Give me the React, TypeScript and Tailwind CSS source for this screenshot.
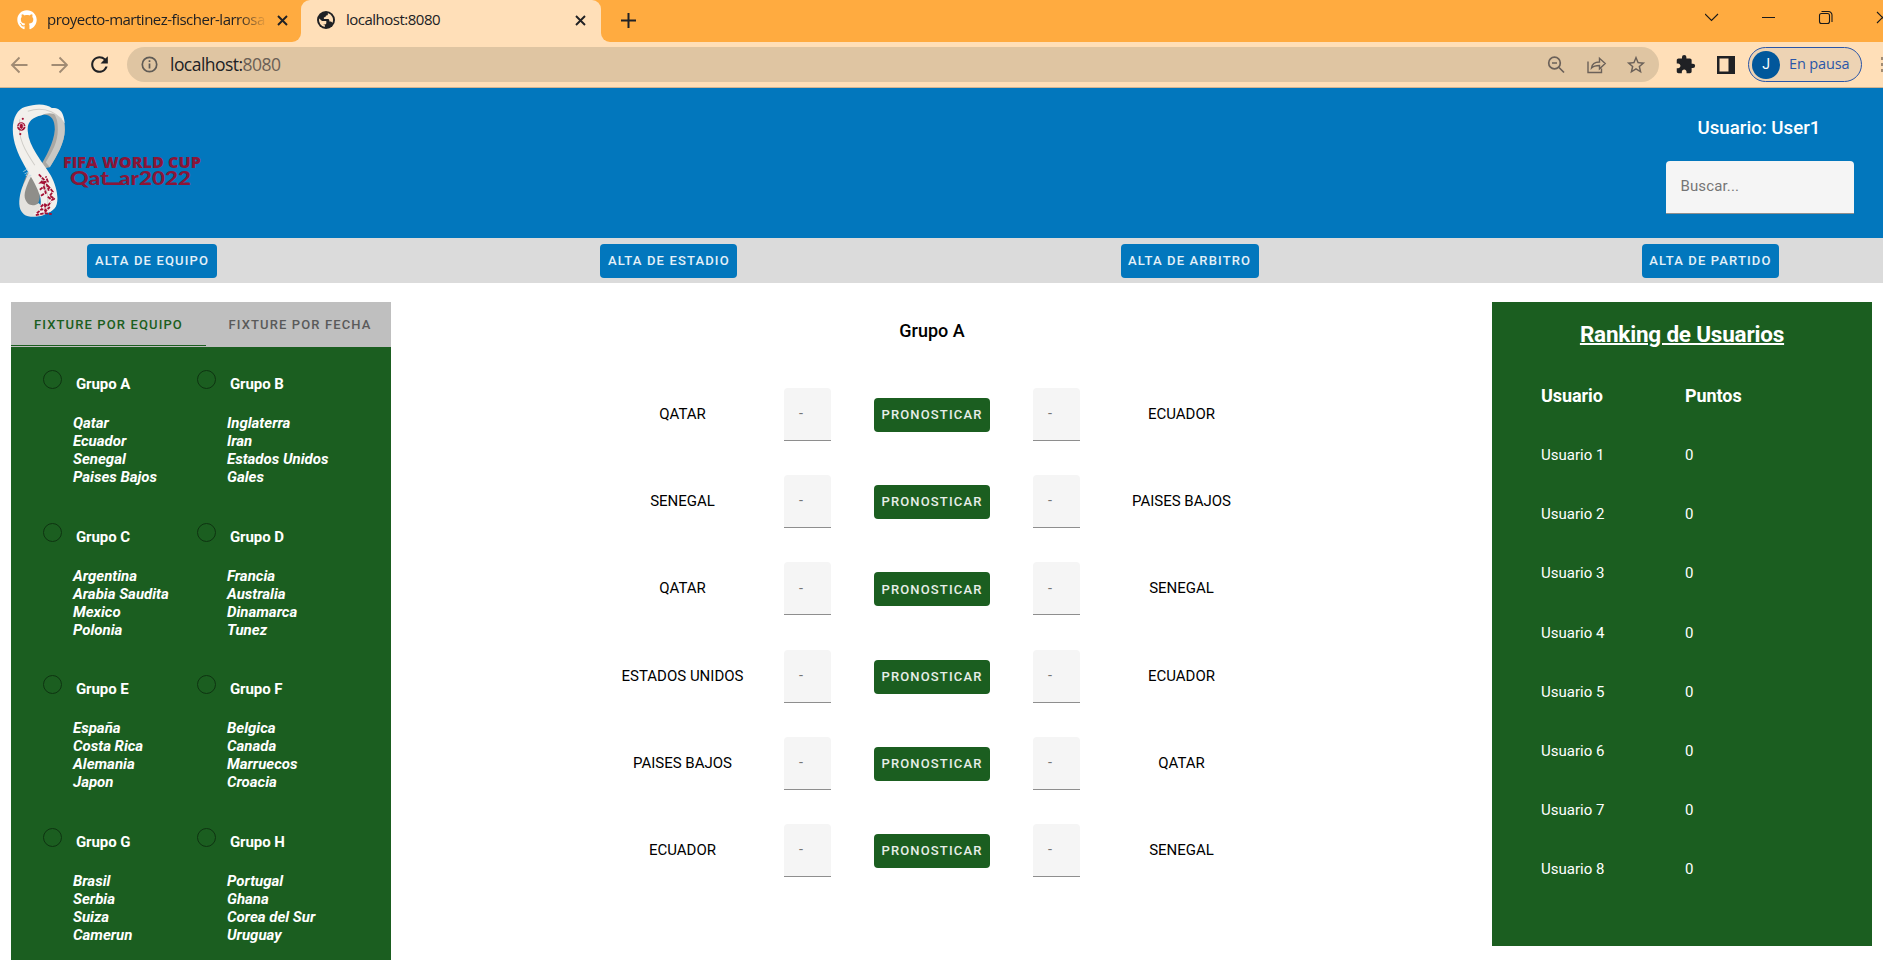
import React from "react";
import { FaGithub } from "react-icons/fa";
import { MdExtension, MdStarOutline, MdRefresh } from "react-icons/md";

const groups = [
  ["A", ["Qatar", "Ecuador", "Senegal", "Paises Bajos"]],
  ["B", ["Inglaterra", "Iran", "Estados Unidos", "Gales"]],
  ["C", ["Argentina", "Arabia Saudita", "Mexico", "Polonia"]],
  ["D", ["Francia", "Australia", "Dinamarca", "Tunez"]],
  ["E", ["España", "Costa Rica", "Alemania", "Japon"]],
  ["F", ["Belgica", "Canada", "Marruecos", "Croacia"]],
  ["G", ["Brasil", "Serbia", "Suiza", "Camerun"]],
  ["H", ["Portugal", "Ghana", "Corea del Sur", "Uruguay"]],
] as [string, string[]][];

const matches = [
  ["QATAR", "ECUADOR"],
  ["SENEGAL", "PAISES BAJOS"],
  ["QATAR", "SENEGAL"],
  ["ESTADOS UNIDOS", "ECUADOR"],
  ["PAISES BAJOS", "QATAR"],
  ["ECUADOR", "SENEGAL"],
];

function CloseIcon({ className = "" }: { className?: string }) {
  return (
    <svg className={className} width="11" height="11" viewBox="0 0 11 11" stroke="#202124" strokeWidth="1.9" fill="none">
      <path d="M1 1l9 9M10 1l-9 9" />
    </svg>
  );
}

function TabBar() {
  return (
    <div className="flex h-[42px] bg-[#ffdfb8] text-[#202124]">
      <div className="flex w-[301px] items-center rounded-br-[9px] bg-[#ffab40] pb-[2px] pl-[17px]">
        <FaGithub size={20} color="#fff" className="shrink-0" />
        <span className="ml-[10px] w-[221px] overflow-hidden pb-px text-[15px] tracking-[-0.5px] whitespace-nowrap [mask-image:linear-gradient(to_right,black_86%,transparent)]">
          proyecto-martinez-fischer-larrosa
        </span>
        <CloseIcon className="ml-[9px]" />
      </div>
      <div className="flex w-[300px] bg-[linear-gradient(to_bottom,#ffab40_50%,#ffdfb8_50%)]">
        <div className="flex w-full items-center rounded-t-[9px] bg-[#ffdfb8] pb-[2px] pl-4">
          <GlobeIcon />
          <span className="ml-[11px] w-[229px] pb-px text-[15px] tracking-[-0.5px]">localhost:8080</span>
          <CloseIcon />
        </div>
      </div>
      <div className="flex flex-1 items-center rounded-bl-[9px] bg-[#ffab40] pl-[20px]">
        <svg className="mb-[2px]" width="15" height="15" viewBox="0 0 15 15" stroke="#202124" strokeWidth="2" fill="none">
          <path d="M7.500 0v15M0 7.500h15" />
        </svg>
        <div className="ml-auto flex h-full items-start pt-[10px]">
          <svg width="178" height="16" viewBox="0 0 178 16" stroke="#1a1a1a" strokeWidth="1.1" fill="none">
            <path d="M0 4l6.500 6.500L13 4M57 7.500h13M172 2l11 11M172 13l11-11" />
            <rect x="114.500" y="3.500" width="10" height="10" rx="2" />
            <path d="M116.500 1.500h7a3.500 3.500 0 0 1 3.500 3.500v7" />
          </svg>
        </div>
      </div>
    </div>
  );
}

function GlobeIcon() {
  return (
    <svg width="18" height="18" viewBox="0 0 18 18">
      <circle cx="9" cy="9" r="9" fill="#202124" />
      <path fill="#ffdfb8" d="M10.800 2.100c.4 1.600-.3 2.300-1.800 2.400-.2 1.400-.8 1.700-2.100 1.800v1.600h4.200c1.300.2 1.300 1.300 1.300 2.500h1.200c1 .2 1.500.8 1.700 1.700A7.100 7.100 0 0 0 10.800 2.100z" />
      <path fill="#ffdfb8" d="M2.100 7.500l4 3.800v1c0 .9.700 1.600 1.700 1.700v2A7.100 7.100 0 0 1 2.100 7.500z" />
      <path fill="#ffdfb8" d="M2.100 7.500l2.600 2.400h4.600v2.200c0 .8-.5 1.300-1.300 1.300H6z" />
    </svg>
  );
}

function Toolbar() {
  return (
    <div className="flex h-[46px] items-center border-b border-[#d0b493] bg-[#ffdfb8]">
      <svg className="ml-[10px]" width="58" height="18" viewBox="0 0 58 18" stroke="#a18b73" strokeWidth="1.900" fill="none">
        <path d="M17.500 9H2.500M9.500 1.500L2 9l7.500 7.500M41.500 9h15M49.500 1.500L57 9l-7.500 7.500" />
      </svg>
      <MdRefresh size={25} className="ml-[19px] text-[#202124]" />
      <div className="ml-[15px] flex h-[35px] w-[1532px] items-center rounded-full bg-[#dfc5a2] pl-[14px]">
        <svg width="17" height="17" viewBox="0 0 17 17" fill="none" stroke="#5f5b55" strokeWidth="1.700">
          <circle cx="8.500" cy="8.500" r="7.200" />
          <path d="M8.500 7.500v5M8.500 4.300v1.700" />
        </svg>
        <span className="ml-3 text-[17.500px] tracking-[-0.540px] text-[#202124]">
          localhost:<span className="text-[#6b6055]">8080</span>
        </span>
        <svg className="mr-[17px] ml-auto" width="61" height="20" viewBox="0 0 61 20" stroke="#6b6159" strokeWidth="1.700" fill="none">
          <circle cx="7.500" cy="8" r="5.800" />
          <path d="M12 12.500l5 5M5 8h5" />
          <path strokeWidth="1.400" d="M41 6.500v11h13.500v-4M44.500 13c.5-4 3.500-6 8-6V3.300l5.700 5.300-5.700 5.200V10.500c-3.500 0-6 .5-8 2.500z" />
        </svg>
        <MdStarOutline size={22} className="mr-[12px] text-[#6b6159]" />
      </div>
      <MdExtension size={21} className="ml-[16px] text-[#202124]" />
      <svg className="ml-[21px]" width="18" height="18" viewBox="0 0 18 18">
        <path fill="#202124" fillRule="evenodd" d="M0 0h18v18H0zM2.500 2.500v13h9v-13z" />
      </svg>
      <div className="ml-[13px] flex h-[35px] w-[114px] items-center rounded-full border border-[#2a56a8] bg-[#edd3b4] pl-[3px] text-[#2a56a8]">
        <span className="flex h-7 w-7 items-center justify-center rounded-full bg-[#01579b] pb-px text-[14px] text-white [font-family:Roboto]">J</span>
        <span className="ml-[9px] pb-[2px] text-[14.500px] tracking-[-0.150px]">En pausa</span>
      </div>
      <svg className="ml-[19px]" width="2" height="16" viewBox="0 0 2 16" fill="#a18b73">
        <path d="M0 0h2v3H0zM0 6h2v3H0zM0 12h2v3H0z" />
      </svg>
    </div>
  );
}

function CupLogo() {
  return (
    <svg width="192" height="116" viewBox="0 0 192 116">
      <g transform="translate(-1.200 0) scale(1 1.020)">
        <path fill="#a9a8a4" fillRule="evenodd" d="M36 4c12-1 19 6 19 21 0 13-8 26-15 37L29 64c7-13 15-25 16-39 0-12-6-17-17-13z" />
        <path fill="#c9c8c4" d="M44 4c9 3 11 12 11 21 0 13-8 26-15 37l-4-5c7-11 12-20 12-32 0-8-1-13-6-18z" />
        <path fill="#8f8e8a" d="M19 65c-5 10-8 20-7 27 2 9 9 13 14 8 5-4 5-12 2-19z" />
        <path fill="#e4e2de" d="M20 64l3 4c-5 9-9 18-8 24 2 8 9 9 14 5l8 10c-5 4-18 5-23 1-6-5-5-14-3-22 2-7 6-13 9-22z" />
        <path fill="#f2f0ec" d="M3 25C3 13 8 5 15 3c12-4 22-3 27 1 8-1 12 4 13 15-6-10-15-12-23-8-10 2-15 7-14 16 1 15 14 29 23 43 5 9 8 20 6 28-2 8-13 12-24 10 8-3 10-12 6-21C24 71 3 50 3 25z" />
        <path fill="none" stroke="#cfcdc8" strokeWidth="1" d="M10 15c-3 18 6 32 15 45M18 7c13-4 24-2 34 8M30 70c7 12 10 22 7 34" />
        <circle cx="11.500" cy="22" r="4.200" fill="#a41135" />
        <circle cx="13" cy="14.500" r="1.100" fill="#a41135" />
        <circle cx="10.500" cy="29.500" r="1.100" fill="#a41135" />
        <path fill="none" stroke="#f2f0ec" strokeWidth=".8" d="M9.500 20l2-1 2 1v3l-2 2-2-2zM7.500 22h2M13.500 22h3" />
        <path fill="none" stroke="#a41135" strokeWidth="1.800" strokeDasharray="3.500 1" d="M29 69l5 5-3 3 7-1-2-5M32 77l5 2 2 6M30 84l4-3 2 6-5 3M38 80l5 6-3 4 5 3M38 91l4 3 3-1M31 101l3-3 4 2 3-4M27 107l5-4 4 2 4-4M26 109l9-2 7 1M35 98l1 9" />
      </g>
      <text x="11" y="66" transform="rotate(58 11 66)" className="[font-family:'Open_Sans']" fontSize="7" fill="#c9d9e4">TM</text>
      <text x="52" y="64" className="[font-family:'Open_Sans',sans-serif]" fontSize="15" fontWeight="800" fill="#8a1538" textLength="138" lengthAdjust="spacingAndGlyphs">FIFA WORLD CUP</text>
      <text x="59" y="81" className="[font-family:Lato,sans-serif]" fontSize="19.500" fontWeight="900" fill="#8a1538" textLength="39" lengthAdjust="spacingAndGlyphs">Qat</text>
      <path stroke="#8a1538" strokeWidth="2.600" d="M95 79.700h17" />
      <text x="108" y="81" className="[font-family:Lato,sans-serif]" fontSize="19.500" fontWeight="900" fill="#8a1538" textLength="72" lengthAdjust="spacingAndGlyphs">ar2022</text>
    </svg>
  );
}

function Button({ children, className }: { children: string; className: string }) {
  return (
    <button className={"flex h-[34px] shrink-0 items-center justify-center rounded-[4px] text-[13px] font-medium tracking-[1.150px] whitespace-nowrap text-white/90 " + className}>
      {children}
    </button>
  );
}

function ScoreInput() {
  return (
    <div className="flex h-[53px] w-[47px] items-center rounded-t-[4px] border-b border-[#8e8e8e] bg-[#f5f5f5] pl-[15px] text-[14.400px] text-[#757575]">-</div>
  );
}

export default function App() {
  return (
    <div className="flex h-[960px] w-[1883px] flex-col overflow-hidden bg-white [font-family:Roboto,sans-serif]">
      <div className="[font-family:'Open_Sans',sans-serif]">
        <TabBar />
        <Toolbar />
      </div>
      <header className="flex h-[150px] shrink-0 justify-between bg-[#0277bd] pr-[29px] pl-[11px]">
        <div className="pt-[16px]"><CupLogo /></div>
        <div className="flex w-[188px] flex-col items-center pt-[26px]">
          <div className="h-[47px] pr-[2px] text-[18.700px] leading-[29px] font-medium text-white">Usuario: User1</div>
          <div className="flex h-[53px] w-full items-center rounded-t-[4px] border-b border-[#8e8e8e] bg-[#f5f5f5] pb-px pl-[14.400px] text-[15px] tracking-[0.150px] text-[#757575]">Buscar...</div>
        </div>
      </header>
      <nav className="flex h-[45px] shrink-0 justify-between bg-[#dbdbdb] pt-[6px] pr-[104px] pl-[87px]">
        <Button className="w-[130px] bg-[#0277bd]">ALTA DE EQUIPO</Button>
        <Button className="w-[137px] bg-[#0277bd]">ALTA DE ESTADIO</Button>
        <Button className="w-[138px] bg-[#0277bd]">ALTA DE ARBITRO</Button>
        <Button className="w-[137px] bg-[#0277bd]">ALTA DE PARTIDO</Button>
      </nav>
      <main className="flex flex-1 items-start pt-[19px] pl-[11px]">
        <aside className="h-[658px] w-[380px] bg-[#1b5e20]">
          <div className="flex h-[45px] bg-[#bfbfbf] text-[13px] font-medium tracking-[1.120px]">
            <div className="mb-[1px] flex w-[195px] items-center justify-center border-b border-[#1b5e20] pt-[2px] text-[#1b5e20]">FIXTURE POR EQUIPO</div>
            <div className="flex flex-1 items-center justify-center pl-[3px] text-[#5a5a5a]">FIXTURE POR FECHA</div>
          </div>
          <div className="grid auto-rows-[152.500px] grid-cols-[154px_154px] pt-[23px] pl-[32px] text-[15px] font-bold text-white">
            {groups.map(([name, teams]) => (
              <div key={name}>
                <div className="flex h-[44px]">
                  <span className="h-[19px] w-[19px] rounded-full border border-[#0e3411]" />
                  <span className="mt-[5px] ml-[14px] leading-[18px] tracking-[-0.100px]">Grupo {name}</span>
                </div>
                <div className="pl-[30px] leading-[18px] italic">
                  {teams.map((t) => <div key={t}>{t}</div>)}
                </div>
              </div>
            ))}
          </div>
        </aside>
        <section className="ml-[190px] flex w-[702px] flex-col items-center">
          <h2 className="mt-[15px] h-[71px] text-[18px] leading-[28px] font-medium">Grupo A</h2>
          {matches.map(([a, b], i) => (
            <div key={i} className="flex h-[87.200px] items-start text-[15px]">
              <div className="w-[203px] pt-[17px] text-center leading-[18px]">{a}</div>
              <ScoreInput />
              <Button className="mx-[43px] mt-[10px] w-[116px] bg-[#1b5e20]">PRONOSTICAR</Button>
              <ScoreInput />
              <div className="w-[203px] pt-[17px] text-center leading-[18px]">{b}</div>
            </div>
          ))}
        </section>
        <aside className="ml-[209px] h-[644px] w-[380px] bg-[#1b5e20] text-white">
          <h1 className="pt-[18px] text-center text-[22.500px] leading-[28px] font-bold tracking-[-0.200px] underline decoration-2">Ranking de Usuarios</h1>
          <div className="grid grid-cols-[144px_144px] pt-[34px] pl-[49px] text-[18px] leading-[28px] font-bold tracking-[-0.080px]">
            <span>Usuario</span><span>Puntos</span>
          </div>
          <div className="grid auto-rows-[59.100px] grid-cols-[144px_144px] items-center pt-[16px] pl-[49px] text-[15px]">
            {[1, 2, 3, 4, 5, 6, 7, 8].map((n) => (
              <React.Fragment key={n}><span>Usuario {n}</span><span>0</span></React.Fragment>
            ))}
          </div>
        </aside>
      </main>
    </div>
  );
}
